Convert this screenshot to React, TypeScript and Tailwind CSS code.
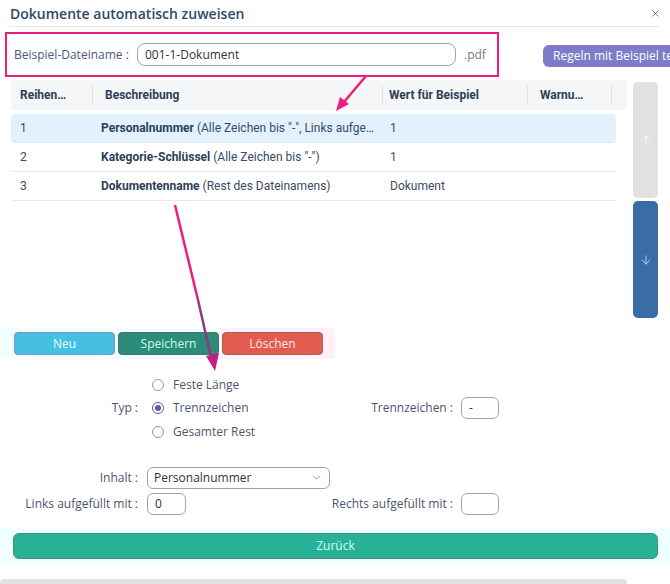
import { ArrowDown, ArrowUp, ChevronDown, X } from 'lucide-react';

const rows = [
  { nr: '1', name: 'Personalnummer', desc: '(Alle Zeichen bis "-", Links aufgefüllt mit "0")', wert: '1', active: true },
  { nr: '2', name: 'Kategorie-Schlüssel', desc: '(Alle Zeichen bis "-")', wert: '1', active: false },
  { nr: '3', name: 'Dokumentenname', desc: '(Rest des Dateinamens)', wert: 'Dokument', active: false },
];

function Radio({ checked, label }: { checked?: boolean; label: string }) {
  return (
    <div className="h-[23.5px] flex items-center pl-[5px]">
      <span className={`w-[12px] h-[12px] rounded-full border flex items-center justify-center ${checked ? 'border-[#5b57b5]' : 'border-[#9a9a9a]'}`}>
        {checked && <span className="w-[6px] h-[6px] rounded-full bg-[#5b57b5]" />}
      </span>
      <span className="ml-[9px] text-[12px] text-[#4b566e]">{label}</span>
    </div>
  );
}

export default function App() {
  return (
    <div className="w-[670px] h-[584px] relative overflow-hidden bg-white font-['Open_Sans',sans-serif]">
      {/* titel */}
      <div className="mx-[10px] h-[27px] flex items-center justify-between border-b border-[#e6e6e6]">
        <span className="text-[14px] font-semibold text-[#2f4868]">Dokumente automatisch zuweisen</span>
        <X size={11} strokeWidth={1.6} className="text-[#555] mr-[-1px]" />
      </div>

      <div className="mt-[5px] flex items-start">
        <div className="ml-[5px] w-[494px] h-[45px] border-2 border-[#ec1e79] flex items-center pl-[7px] shrink-0">
          <span className="text-[12px] text-[#4b5a78] w-[123px]">Beispiel-Dateiname :</span>
          <div className="w-[319px] h-[23px] rounded-[8px] border border-[#a3a3a3] flex items-center pl-[7px] text-[12px] text-[#333]">
            001-1-Dokument
          </div>
          <span className="ml-[8px] text-[12px] text-[#7a7a7a]">.pdf</span>
        </div>
        <button className="ml-[44px] mt-[13px] h-[22px] px-[10px] rounded-[6px] bg-[#7d7cc8] text-white text-[12px] whitespace-nowrap shrink-0">
          Regeln mit Beispiel testen
        </button>
      </div>

      <div className="mt-[3px] flex items-start">
        {/* tabelle */}
        <div className="ml-[11px] w-[616px] font-['Roboto',sans-serif] text-[12px]">
          <div className="h-[30px] bg-[#f5f6f8] rounded-[4px] flex items-center font-bold text-[#2e3f56]">
            <div className="w-[82px] pl-[9px] border-r border-[#e2e2e2] h-[18px] flex items-center">Reihen…</div>
            <div className="w-[290px] pl-[12px] border-r border-[#e2e2e2] h-[18px] flex items-center">Beschreibung</div>
            <div className="w-[145px] pl-[6px] border-r border-[#e2e2e2] h-[18px] flex items-center">Wert für Beispiel</div>
            <div className="w-[84px] pl-[12px] border-r border-[#e2e2e2] h-[18px] flex items-center">Warnu…</div>
          </div>
          <div className="w-[605px] mt-[4px]">
            {rows.map(r => (
              <div
                key={r.nr}
                className={`h-[29px] flex items-center text-[#3a4a5e] border-b border-[#e8e8e8] ${r.active ? 'bg-[#e3f1fc] rounded-[4px]' : ''}`}
              >
                <div className="w-[82px] pl-[9px]">{r.nr}</div>
                <div className="w-[290px] pl-[8px] pr-[6px] truncate">
                  <span className="font-bold text-[#2e3f56]">{r.name}</span> {r.desc}
                </div>
                <div className="w-[145px] pl-[7px]">{r.wert}</div>
              </div>
            ))}
          </div>
        </div>
        {/* scroll knöpfe */}
        <div className="ml-[6px] mt-[2px] flex flex-col gap-[3px]">
          <div className="w-[25px] h-[116px] rounded-[5px] bg-[#e1e1e1] flex items-center justify-center">
            <ArrowUp size={14} strokeWidth={1.3} className="text-white" />
          </div>
          <div className="w-[25px] h-[117px] rounded-[5px] bg-[#3a6ca6] flex items-center justify-center">
            <ArrowDown size={14} strokeWidth={1.3} className="text-[#dbe6f3]" />
          </div>
        </div>
      </div>

      {/* aktionen */}
      <div className="mt-[10px] h-[31px] flex items-center">
        <div className="h-full w-[220px] bg-[#f0fefe] flex items-center pl-[14px] gap-[3px]">
          <button className="w-[101px] h-[23px] rounded-[4px] bg-[#45c0e2] border border-[#7c93c8] text-[12px] text-[#eafcff]">Neu</button>
          <button className="w-[101px] h-[23px] rounded-[4px] bg-[#2a8c79] border border-[#4f6a6a] text-[12px] text-[#cdfcef]">Speichern</button>
        </div>
        <div className="h-full w-[115px] bg-[#fff0fa] flex items-center pl-[2px]">
          <button className="w-[101px] h-[23px] rounded-[4px] bg-[#e35b50] border border-[#9a6a4e] text-[12px] text-[#ffe6e4]">Löschen</button>
        </div>
      </div>

      {/* formular */}
      <div className="mt-[14px] text-[12px] text-[#4b566e]">
        <div className="flex items-center">
          <div className="w-[138px] text-right">Typ :</div>
          <div className="ml-[9px] w-[186px]">
            <Radio label="Feste Länge" />
            <Radio checked label="Trennzeichen" />
            <Radio label="Gesamter Rest" />
          </div>
          <div className="w-[120px] text-right whitespace-nowrap">Trennzeichen :</div>
          <div className="ml-[8px] w-[38px] h-[22px] rounded-[6px] border border-[#a3a3a3] flex items-center pl-[7px] text-[#333]">-</div>
        </div>

        <div className="mt-[23px] flex items-center">
          <div className="w-[138px] text-right whitespace-nowrap">Inhalt :</div>
          <div className="ml-[9px] w-[183px] h-[22px] rounded-[6px] border border-[#a3a3a3] flex items-center justify-between pl-[6px] pr-[6px] text-[#333]">
            <span>Personalnummer</span>
            <ChevronDown size={13} strokeWidth={1.4} className="text-[#777]" />
          </div>
        </div>

        <div className="mt-[4px] flex items-center">
          <div className="w-[138px] text-right whitespace-nowrap">Links aufgefüllt mit :</div>
          <div className="ml-[9px] w-[39px] h-[22px] rounded-[6px] border border-[#a3a3a3] flex items-center pl-[7px] text-[#333]">0</div>
          <div className="ml-[147px] w-[120px] flex justify-end whitespace-nowrap">Rechts aufgefüllt mit :</div>
          <div className="ml-[8px] w-[38px] h-[22px] rounded-[6px] border border-[#a3a3a3]" />
        </div>
      </div>

      <div className="mt-[13px] py-[4px] bg-[#effefe]">
        <button className="ml-[13px] w-[645px] h-[26px] rounded-[6px] bg-[#27b197] border border-[#4d8a80] text-[12px] text-[#d2fff6]">
          Zurück
        </button>
      </div>

      <div className="mt-[16px] w-[627px] h-[7px] rounded-full bg-[#e2e2e2]" />

      {/* markierungs-pfeile */}
      <svg className="absolute inset-0 pointer-events-none" width={670} height={584}>
        <line x1={366} y1={76} x2={344} y2={102} stroke="#ee1c7e" strokeWidth={2.5} />
        <polygon points="336,111 340,97 349,104" fill="#ee1c7e" />
        <line x1={175} y1={205} x2={198} y2={300} stroke="#ee1c7e" strokeWidth={2.5} />
        <line x1={198} y1={300} x2={211} y2={357} stroke="#8d3a86" strokeWidth={2.5} />
        <polygon points="215,371 206,356 219,353" fill="#c21e86" />
      </svg>
    </div>
  );
}
